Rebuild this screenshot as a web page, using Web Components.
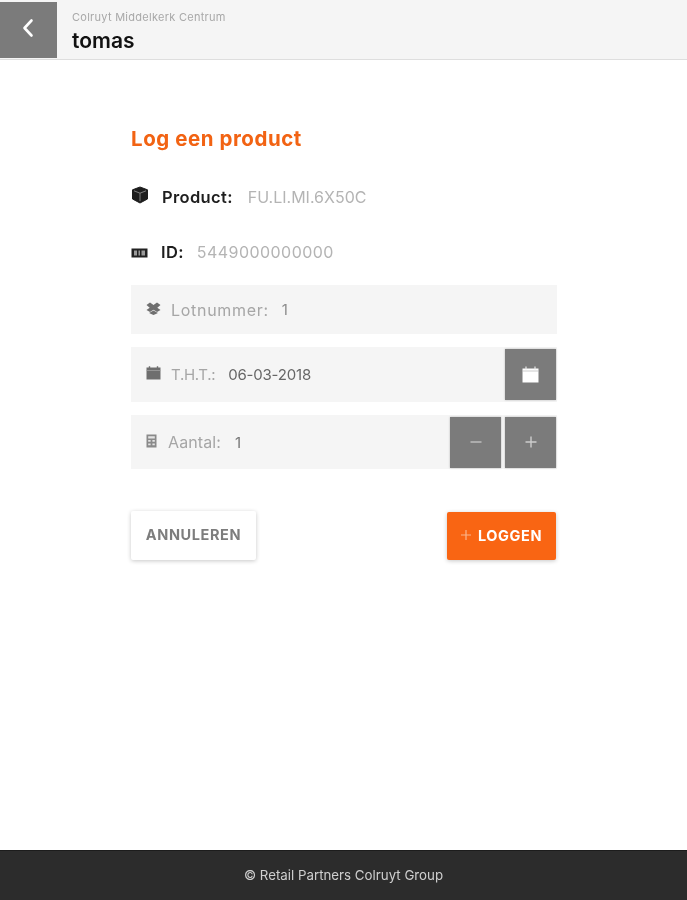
<!DOCTYPE html>
<html lang="nl">
<head>
<meta charset="utf-8">
<title>Log een product</title>
<style>
  html, body { margin: 0; height: 100%; }
  body {
    display: flex;
    flex-direction: column;
    height: 900px;
    overflow: hidden;
    background: #fff;
    font-family: "Inter", "Liberation Sans", sans-serif;
    filter: blur(.45px);
  }
</style>
</head>
<body>
<app-header site="Colruyt Middelkerk Centrum" user="tomas"></app-header>
<log-form></log-form>
<app-footer>© Retail Partners Colruyt Group</app-footer>

<script>
const ICONS = {
  back: '<svg width="14" height="22" viewBox="0 0 14 22"><path d="M10.500 3.500 3.500 11l7 7.500" fill="none" stroke="#fff" stroke-width="2.600" stroke-linecap="round" stroke-linejoin="round"/></svg>',
  cube: '<svg width="18" height="18" viewBox="0 0 18 18"><path d="M9 1 16.500 3.800v9.200L9 17 1.500 13V3.800z" fill="#1d1d1d" stroke="#1d1d1d" stroke-width="1" stroke-linejoin="round"/><path d="M3 4.800 9 7.200l6-2.400M9 7.200v8" fill="none" stroke="#8a8a8a" stroke-width=".9"/></svg>',
  barcode: '<svg width="17" height="10" viewBox="0 0 17 10"><rect x=".5" y=".5" width="16" height="9" fill="#222"/><path d="M3 2.500h3v5H3zM7.500 2.500h1.500v5H7.500zM10.500 2.500h3.500v5h-3.500z" fill="#9a9a9a"/></svg>',
  dropbox: '<svg width="15" height="13" viewBox="0 0 15 13"><path d="M4 .5 7.500 3 11 .5 14.500 3 11.300 5.700 14.500 8 11 10 7.500 7.700 4 10 .5 8 3.700 5.700.5 3z" fill="#6f6f6f"/><path d="M3.500 10.400 4 10.600l3.500-2.100 3.500 2.100.5-.2v.8L7.500 13l-4-1.800z" fill="#6f6f6f"/></svg>',
  calendar: '<svg width="15" height="14" viewBox="0 0 15 14"><path d="M.5 1.500h14v12H.5z" fill="#6e6e6e"/><path d="M3.500.3v2M11.500.3v2" stroke="#6e6e6e" stroke-width="1.400"/><path d="M.5 4.500h14" stroke="#a5a5a5" stroke-width=".7"/></svg>',
  calculator: '<svg width="11" height="14" viewBox="0 0 11 14"><rect x=".5" y=".5" width="10" height="13" fill="#8a8a8a"/><path d="M2.200 2.200h6.600v2.200H2.200zM2.200 6h2.400v1.800H2.200zM6.400 6h2.400v1.800H6.400zM2.200 9.500h2.400v1.800H2.200zM6.400 9.500h2.400v1.800H6.400z" fill="#e4e4e4"/></svg>',
  calendarWhite: '<svg width="17" height="17" viewBox="0 0 17 17"><path d="M.5 2.500h16v14H.5z" fill="#fff"/><path d="M4 .5v3M13 .5v3" stroke="#e6e6e6" stroke-width="1.200"/><path d="M.5 5h16" stroke="#aaa" stroke-width=".6"/></svg>',
  minus: '<svg width="12" height="12" viewBox="0 0 12 12"><path d="M.5 6h11" stroke="#c2c2c2" stroke-width="1.400"/></svg>',
  plus: '<svg width="12" height="12" viewBox="0 0 12 12"><path d="M.5 6h11M6 .5v11" stroke="#cdcdcd" stroke-width="1.400"/></svg>',
  plusOrange: '<svg width="10" height="10" viewBox="0 0 10 10"><path d="M0 5h10M5 0v10" stroke="#fbb58c" stroke-width="1.200"/></svg>'
};

class AppHeader extends HTMLElement {
  constructor() {
    super();
    this.attachShadow({ mode: 'open' });
    this.shadowRoot.innerHTML = `
      <style>
        :host {
          display: flex;
          flex: none;
          height: 60px;
          box-sizing: border-box;
          background: #f5f5f5;
          border-bottom: 1px solid #dedede;
          padding-top: 2px;
        }
        .back {
          display: flex;
          align-items: center;
          justify-content: center;
          width: 57px;
          margin-bottom: 1px;
          background: #7b7b7b;
          padding-bottom: 4px;
          padding-right: 2px;
          box-sizing: border-box;
        }
        .text { padding: 9px 0 0 15px; }
        .site { font-size: 11px; line-height: 13px; color: #a8a8a8; letter-spacing: .27px; }
        .user { font-size: 21px; line-height: 24px; font-weight: 600; color: #111; margin-top: 5px; }
      </style>
      <div class="back">${ICONS.back}</div>
      <div class="text">
        <div class="site">${this.getAttribute('site')}</div>
        <div class="user">${this.getAttribute('user')}</div>
      </div>
    `;
  }
}

class InfoRow extends HTMLElement {
  constructor() {
    super();
    this.attachShadow({ mode: 'open' });
    this.shadowRoot.innerHTML = `
      <style>
        :host {
          display: flex;
          align-items: center;
          height: 24px;
          font-size: 16px;
        }
        .icon { display: flex; margin-right: var(--icon-gap, 14px); }
        .label { font-size: 16.500px; font-weight: 600; color: #1e1e1e; letter-spacing: .35px; margin-right: var(--label-gap, 15px); }
        .value { color: #b4b4b4; letter-spacing: var(--value-ls, 0); }
      </style>
      <span class="icon"><slot name="icon"></slot></span>
      <span class="label"><slot name="label"></slot></span>
      <span class="value"><slot></slot></span>
    `;
  }
}

class FieldRow extends HTMLElement {
  constructor() {
    super();
    this.attachShadow({ mode: 'open' });
    this.shadowRoot.innerHTML = `
      <style>
        :host {
          display: flex;
          align-items: center;
          box-sizing: border-box;
          background: #f5f5f5;
          padding: 0 1px 0 15px;
          font-size: 15px;
        }
        .icon { display: flex; margin-right: var(--icon-gap, 10px); }
        .label { font-size: var(--label-size, 16px); color: #a6a6a6; letter-spacing: var(--label-ls, 0); margin-right: var(--label-gap, 13px); }
        .value { color: var(--value-color, #8c8c8c); letter-spacing: var(--value-ls, 0); flex: 1; }
        .actions { display: flex; gap: 4px; }
      </style>
      <span class="icon"><slot name="icon"></slot></span>
      <span class="label"><slot name="label"></slot></span>
      <span class="value"><slot></slot></span>
      <span class="actions"><slot name="actions"></slot></span>
    `;
  }
}

class SquareButton extends HTMLElement {
  constructor() {
    super();
    this.attachShadow({ mode: 'open' });
    this.shadowRoot.innerHTML = `
      <style>
        :host {
          display: flex;
          align-items: center;
          justify-content: center;
          width: 51px;
          height: 51px;
          background: #7b7b7b;
          box-shadow: 0 0 2px rgba(0, 0, 0, .25);
        }
      </style>
      <slot></slot>
    `;
  }
}

class ActionButton extends HTMLElement {
  constructor() {
    super();
    this.attachShadow({ mode: 'open' });
    this.shadowRoot.innerHTML = `
      <style>
        :host {
          display: flex;
          align-items: center;
          justify-content: center;
          gap: 7px;
          box-sizing: border-box;
          height: var(--btn-height, 48px);
          padding-bottom: 2px;
          border-radius: 2px;
          font-size: 14.500px;
          font-weight: 700;
          letter-spacing: .6px;
          box-shadow: 0 1px 4px rgba(0, 0, 0, .22);
          background: var(--btn-bg, #fff);
          color: var(--btn-color, #7d7d7d);
        }
      </style>
      <slot></slot>
    `;
  }
}

class LogForm extends HTMLElement {
  constructor() {
    super();
    this.attachShadow({ mode: 'open' });
    this.shadowRoot.innerHTML = `
      <style>
        :host {
          display: block;
          flex: 1;
          box-sizing: border-box;
          padding: 67px 130px 0 131px;
        }
        h1 {
          margin: 0 0 34px;
          font-size: 20.500px;
          line-height: 24px;
          font-weight: 700;
          color: #f26313;
          letter-spacing: .55px;
        }
        .product { --icon-gap: 13px; margin-bottom: 31px; }
        .id { --icon-gap: 13px; --label-gap: 13px; --value-ls: .45px; margin-bottom: 21px; }
        .lot { height: 49px; margin-bottom: 13px; --label-ls: .7px; }
        .tht { height: 55px; margin-bottom: 13px; --value-color: #666; --label-size: 15px; --label-ls: -.3px; --value-ls: -.2px; }
        .aantal { height: 54px; margin-bottom: 42px; --icon-gap: 11px; --label-ls: .1px; --label-gap: 14px; --value-color: #777; }
        .buttons { display: flex; justify-content: space-between; align-items: flex-end; padding-right: 1px; }
        .cancel { width: 125px; --btn-height: 49px; }
        .save { width: 109px; --btn-bg: #f96513; --btn-color: #fff; }
      </style>
      <h1>Log een product</h1>
      <info-row class="product"><span slot="icon">${ICONS.cube}</span><span slot="label">Product:</span>FU.LI.MI.6X50C</info-row>
      <info-row class="id"><span slot="icon">${ICONS.barcode}</span><span slot="label">ID:</span>5449000000000</info-row>
      <field-row class="lot"><span slot="icon">${ICONS.dropbox}</span><span slot="label">Lotnummer:</span>1</field-row>
      <field-row class="tht"><span slot="icon">${ICONS.calendar}</span><span slot="label">T.H.T.:</span>06-03-2018<square-button slot="actions">${ICONS.calendarWhite}</square-button></field-row>
      <field-row class="aantal"><span slot="icon">${ICONS.calculator}</span><span slot="label">Aantal:</span>1<square-button slot="actions">${ICONS.minus}</square-button><square-button slot="actions">${ICONS.plus}</square-button></field-row>
      <div class="buttons">
        <action-button class="cancel">ANNULEREN</action-button>
        <action-button class="save">${ICONS.plusOrange}LOGGEN</action-button>
      </div>
    `;
  }
}

class AppFooter extends HTMLElement {
  constructor() {
    super();
    this.attachShadow({ mode: 'open' });
    this.shadowRoot.innerHTML = `
      <style>
        :host {
          display: flex;
          flex: none;
          align-items: center;
          justify-content: center;
          height: 50px;
          background: #2c2c2c;
          color: #cfcfcf;
          font-size: 13.300px;
          border-top: 1px solid #1c1c1c;
          box-sizing: border-box;
          padding-bottom: 2px;
        }
      </style>
      <slot></slot>
    `;
  }
}

customElements.define('app-header', AppHeader);
customElements.define('info-row', InfoRow);
customElements.define('field-row', FieldRow);
customElements.define('square-button', SquareButton);
customElements.define('action-button', ActionButton);
customElements.define('log-form', LogForm);
customElements.define('app-footer', AppFooter);
</script>
</body>
</html>
